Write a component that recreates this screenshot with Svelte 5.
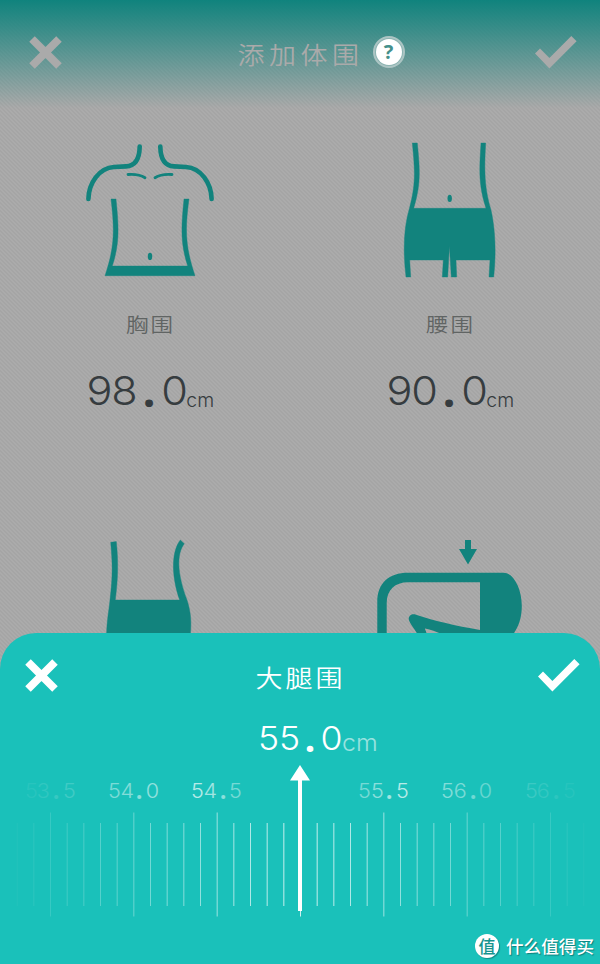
<script lang="ts">
	type Measure = { id: string; label: string; value: string };

	const measures: Measure[] = [
		{ id: 'chest', label: '胸围', value: '98.0' },
		{ id: 'waist', label: '腰围', value: '90.0' },
		{ id: 'hip', label: '', value: '' },
		{ id: 'thigh', label: '', value: '' }
	];

	const current = '55.0';

	// Ruler labels, one for each half centimetre; the middle one sits under the pointer
	const labels = [
		{ text: '53.5', from: 0.06, to: 0.16 },
		{ text: '54.0', from: 0.42, to: 0.52 },
		{ text: '54.5', from: 0.68, to: 0.4 },
		{ text: '', from: 0, to: 0 },
		{ text: '55.5', from: 0.4, to: 0.68 },
		{ text: '56.0', from: 0.46, to: 0.34 },
		{ text: '56.5', from: 0.14, to: 0.05 }
	];

	const step = 50 / 3;
	const ticks = Array.from({ length: 35 }, (_, i) => {
		const n = i + 1;
		const major = (n - 3) % 5 === 0;
		return {
			x: n * step,
			y: major ? 0.5 : 11,
			height: major ? 104 : 83,
			opacity: Math.max(0.04, 0.78 * (1 - Math.abs(n - 18) / 18))
		};
	});
</script>

{#snippet cross()}
	<svg class="icon" width="33" height="33" viewBox="0 0 33 33">
		<path d="M3 3 30 30M30 3 3 30" fill="none" stroke="currentColor" stroke-width="7.8" />
	</svg>
{/snippet}

{#snippet check()}
	<svg class="icon" width="42" height="33" viewBox="0 0 42 33">
		<path d="M0 17.5 5 12.6 14.4 22 36.3 0 41.6 5.2 14.4 32.6Z" fill="currentColor" />
	</svg>
{/snippet}

{#snippet digits(value: string)}
	{#each value.split('') as ch}
		<span class="digit" class:digit--dot={ch === '.'}>{ch}</span>
	{/each}
{/snippet}

<div class="screen">
	<header class="header">
		<button class="icon-btn" aria-label="关闭">{@render cross()}</button>
		<h1 class="header__title">
			<span class="cjk">添加体围</span>
			<span class="help">?</span>
		</h1>
		<button class="icon-btn icon-btn--end" aria-label="确定">{@render check()}</button>
	</header>

	<main class="grid">
		{#each measures as m}
			<section class="card">
				{#if m.id === 'chest'}
					<svg class="figure" width="160" height="160" viewBox="70 130 160 160">
						<g fill="none" stroke="currentColor" stroke-linecap="round">
							<path stroke-width="4.6" d="M139.7 146.5C139.5 159 135.5 166 126 166.4L114 167C99 168 88.8 183 88.4 199M160.3 146.5C160.5 159 164.5 166 174 166.4L186 167C201 168 211.2 183 211.6 199" />
							<path stroke-width="2.8" d="M128 174.5C135 174 140 174.5 145 177.7M172 174.5C165 174 160 174.5 155 177.7" />
						</g>
						<path class="figure__body" d="M111 199H116C119 228 119.5 244 112.3 266H187.7C180.5 244 181 228 184 199H189C185 229 185 246 195 275.7H105C115 246 114.5 229 111 199Z" />
						<ellipse cx="150" cy="256.4" rx="2.2" ry="3.6" fill="currentColor" />
					</svg>
				{:else if m.id === 'waist'}
					<svg class="figure" width="160" height="160" viewBox="370 130 160 160">
						<path class="figure__body" d="M412.3 143H417.3C420 170 421 184 413.7 208.3H486C478 184 479.5 168 481 143H485.7C484 172 484.5 188 491 210C495 228 496.5 252 493.7 277H489L490 260H456L456.7 277H451.3L449.4 246 447.7 277H442.3L443.3 260H409.7L410.7 277H406C403 252 403.5 228 409.5 208C416 184 415 170 412.3 143Z" />
						<ellipse cx="449.7" cy="198.4" rx="2.2" ry="3.6" fill="currentColor" />
					</svg>
				{:else if m.id === 'hip'}
					<svg class="figure" width="160" height="160" viewBox="70 527 160 160">
						<path class="figure__body" d="M110.7 542.3 116.3 541.6C118.5 562 118 580 115.3 600H179.7C171.5 577 171 552 180.3 540L184.3 543.7C176.5 554 177 573 187 600C191.5 614 191.5 624 190 640H106.5C106.5 622 108.5 614 110 600C113 575 112.5 564 110.7 542.3Z" />
					</svg>
				{:else}
					<svg class="figure" width="160" height="160" viewBox="370 527 160 160">
						<path fill="currentColor" d="M465 540H471V549H477L468 564.5 459 549H465Z" />
						<path fill="currentColor" d="M377.3 640V602C377.3 583 389 572.7 408 572.7H503.5C513 572.7 521.8 588 521.8 606C521.8 617 519 627 512 636L508 640H438L425 628.6 429 640H420C417 631 412 627 409.5 621.5C407 617 411 613 416 614.7C435 621 455 625.5 480 630V582.3H408C395 582.3 386.7 590 386.7 603V640Z" />
						<path class="figure__gap" d="M425 628.6C431 630 436 631.500 441 634L446 640H430Z" />
					</svg>
				{/if}
				{#if m.label}
					<p class="card__label cjk">{m.label}</p>
					<p class="value value--card">{@render digits(m.value)}<span class="value__unit">cm</span></p>
				{/if}
			</section>
		{/each}
	</main>

	<!-- Bottom sheet with the ruler -->
	<div class="sheet">
		<div class="sheet__bar">
			<button class="icon-btn" aria-label="关闭">{@render cross()}</button>
			<h2 class="sheet__title cjk">大腿围</h2>
			<button class="icon-btn icon-btn--end" aria-label="确定">{@render check()}</button>
		</div>

		<p class="value value--sheet">{@render digits(current)}<span class="value__unit">cm</span></p>

		<div class="ruler">
			<div class="ruler__labels">
				{#each labels as l}
					<span class="ruler__label">
						{#each l.text.split('') as ch, i}
							<span
								class="digit"
								class:digit--dot={ch === '.'}
								style="opacity: {l.from + ((l.to - l.from) * i) / 3}">{ch}</span>
						{/each}
					</span>
				{/each}
			</div>
			<svg class="ruler__ticks" width="600" height="105" viewBox="0 0 600 105">
				{#each ticks as t}
					<rect x={t.x} y={t.y} width="1" height={t.height} fill="#fff" opacity={t.opacity} />
				{/each}
			</svg>
			<svg class="ruler__pointer" width="22" height="147" viewBox="0 0 22 147">
				<path d="M11 0 21 15.5H13V146H9V15.5H1Z" fill="#fff" />
			</svg>
		</div>

		<div class="brand">
			<span class="brand__mark">值</span>
			<span class="brand__name">什么值得买</span>
		</div>
	</div>
</div>

<style>
	:global(body) {
		background: #a8a8a8;
	}

	.screen {
		position: relative;
		width: 600px;
		height: 964px;
		overflow: hidden;
		background: linear-gradient(45deg, #a5a5a5 25%, #ababab 25% 50%, #a5a5a5 50% 75%, #ababab 75%) 0 0 / 4px 4px;
		font-family: Inter, 'Noto Sans CJK SC', sans-serif;
		color: #363c3f;
	}

	h1,
	h2,
	p {
		margin: 0;
		font-weight: 300;
	}

	.cjk {
		font-family: 'Noto Sans CJK SC', sans-serif;
		font-weight: 350;
	}

	.icon-btn {
		display: flex;
		padding: 0;
		border: none;
		background: none;
		color: inherit;
	}

	.icon-btn--end {
		justify-self: end;
	}

	.icon {
		display: block;
	}

	/* Header */
	.header {
		display: grid;
		grid-template-columns: 1fr auto 1fr;
		align-items: center;
		box-sizing: border-box;
		height: 108px;
		padding: 0 23px 4px 29px;
		background: linear-gradient(#10837d, rgba(16, 131, 125, 0));
		color: #aaa;
	}

	.header__title {
		position: relative;
		padding-top: 4px;
		font-size: 27px;
		line-height: 32px;
	}

	.header__title .cjk {
		display: block;
		margin-right: -5px;
		letter-spacing: 4.5px;
		transform: translateX(-5px) scaleY(0.9);
	}

	.help {
		position: absolute;
		left: 100%;
		top: 5px;
		margin-left: 12px;
		width: 26px;
		height: 26px;
		border-radius: 50%;
		background: #fff;
		box-shadow: 0 0 0 1px #8bb3b1, 0 0 0 3px #acc5c4;
		color: #45908b;
		font: 700 20px/26px 'Noto Sans', sans-serif;
		text-align: center;
	}

	/* Measures */
	.grid {
		display: grid;
		grid-template-columns: 1fr 1fr;
		grid-auto-rows: 397px;
		padding-top: 22px;
	}

	.card {
		display: flex;
		flex-direction: column;
		align-items: center;
	}

	.figure {
		display: block;
		flex-shrink: 0;
		color: #12837d;
	}

	.figure__body {
		fill: currentColor;
		stroke: currentColor;
		stroke-width: 0.4;
	}

	.figure__gap {
		fill: #a8a8a8;
	}

	.card__label {
		margin-top: 18px;
		margin-right: -1px;
		color: #606463;
		font-size: 22.5px;
		line-height: 30px;
		letter-spacing: 2px;
		transform: scaleY(0.88);
	}

	.value {
		display: flex;
		align-items: baseline;
		justify-content: center;
		font-weight: 300;
	}

	.digit {
		flex-shrink: 0;
		text-align: center;
		transform: scaleX(1.08);
	}

	.digit--dot {
		font-family: 'Noto Sans', sans-serif;
		font-size: 1.25em;
		font-weight: 700;
		line-height: 0;
		transform: translate(-0.01em, 0.08em) scale(0.9);
	}

	.value--card {
		margin-top: 28px;
		font-size: 40px;
		line-height: 50px;
	}

	.value--card .digit {
		width: 25px;
	}

	.value--card .value__unit {
		width: 27px;
		font-size: 18.5px;
		line-height: 20px;
		transform: translateY(2px) scaleX(1.05);
	}

	/* Sheet */
	.sheet {
		position: absolute;
		inset: auto 0 0;
		display: flex;
		flex-direction: column;
		box-sizing: border-box;
		height: 331px;
		border-radius: 36px 36px 0 0;
		background: #1ac1ba;
		color: #fff;
	}

	.sheet__bar {
		display: grid;
		grid-template-columns: 1fr auto 1fr;
		align-items: center;
		height: 33px;
		padding: 26px 20px 0 25px;
	}

	.sheet__title {
		font-size: 27px;
		line-height: 32px;
		letter-spacing: 3px;
		transform: translate(-2px, 1px) scaleY(0.88);
	}

	.value--sheet {
		margin-top: 21px;
		padding-left: 35px;
		font-size: 33px;
		line-height: 50px;
	}

	.value--sheet .digit {
		width: 21px;
	}

	.value--sheet .value__unit {
		width: 36px;
		font-size: 23.5px;
		opacity: 0.55;
		transform: translateY(1px) scaleX(1.06);
		transform-origin: left;
	}

	.ruler {
		position: relative;
		padding-top: 11px;
	}

	.ruler__labels {
		display: grid;
		grid-template-columns: repeat(7, 83.333px);
		justify-content: center;
		height: 34px;
	}

	.ruler__label {
		display: flex;
		align-items: baseline;
		justify-content: center;
		font-size: 20px;
		font-weight: 300;
		line-height: 26px;
	}

	.ruler__label .digit {
		width: 12.7px;
	}

	.ruler__ticks {
		display: block;
	}

	.ruler__pointer {
		position: absolute;
		left: 289px;
		top: -2px;
	}

	/* Brand */
	.brand {
		display: flex;
		align-items: center;
		justify-content: flex-end;
		gap: 7px;
		margin-top: 17px;
		padding-right: 6px;
		font-family: 'Noto Sans CJK SC', sans-serif;
	}

	.brand__mark {
		width: 24px;
		height: 24px;
		border-radius: 50%;
		background: #fff;
		box-shadow: 1px 1px 1px rgba(0, 60, 60, 0.4);
		color: #16948f;
		font-size: 17px;
		font-weight: 500;
		line-height: 23px;
		text-align: center;
	}

	.brand__name {
		font-size: 17.6px;
		font-weight: 500;
		line-height: 24px;
		text-shadow: 1px 1px 1px rgba(0, 60, 60, 0.5);
	}
</style>
